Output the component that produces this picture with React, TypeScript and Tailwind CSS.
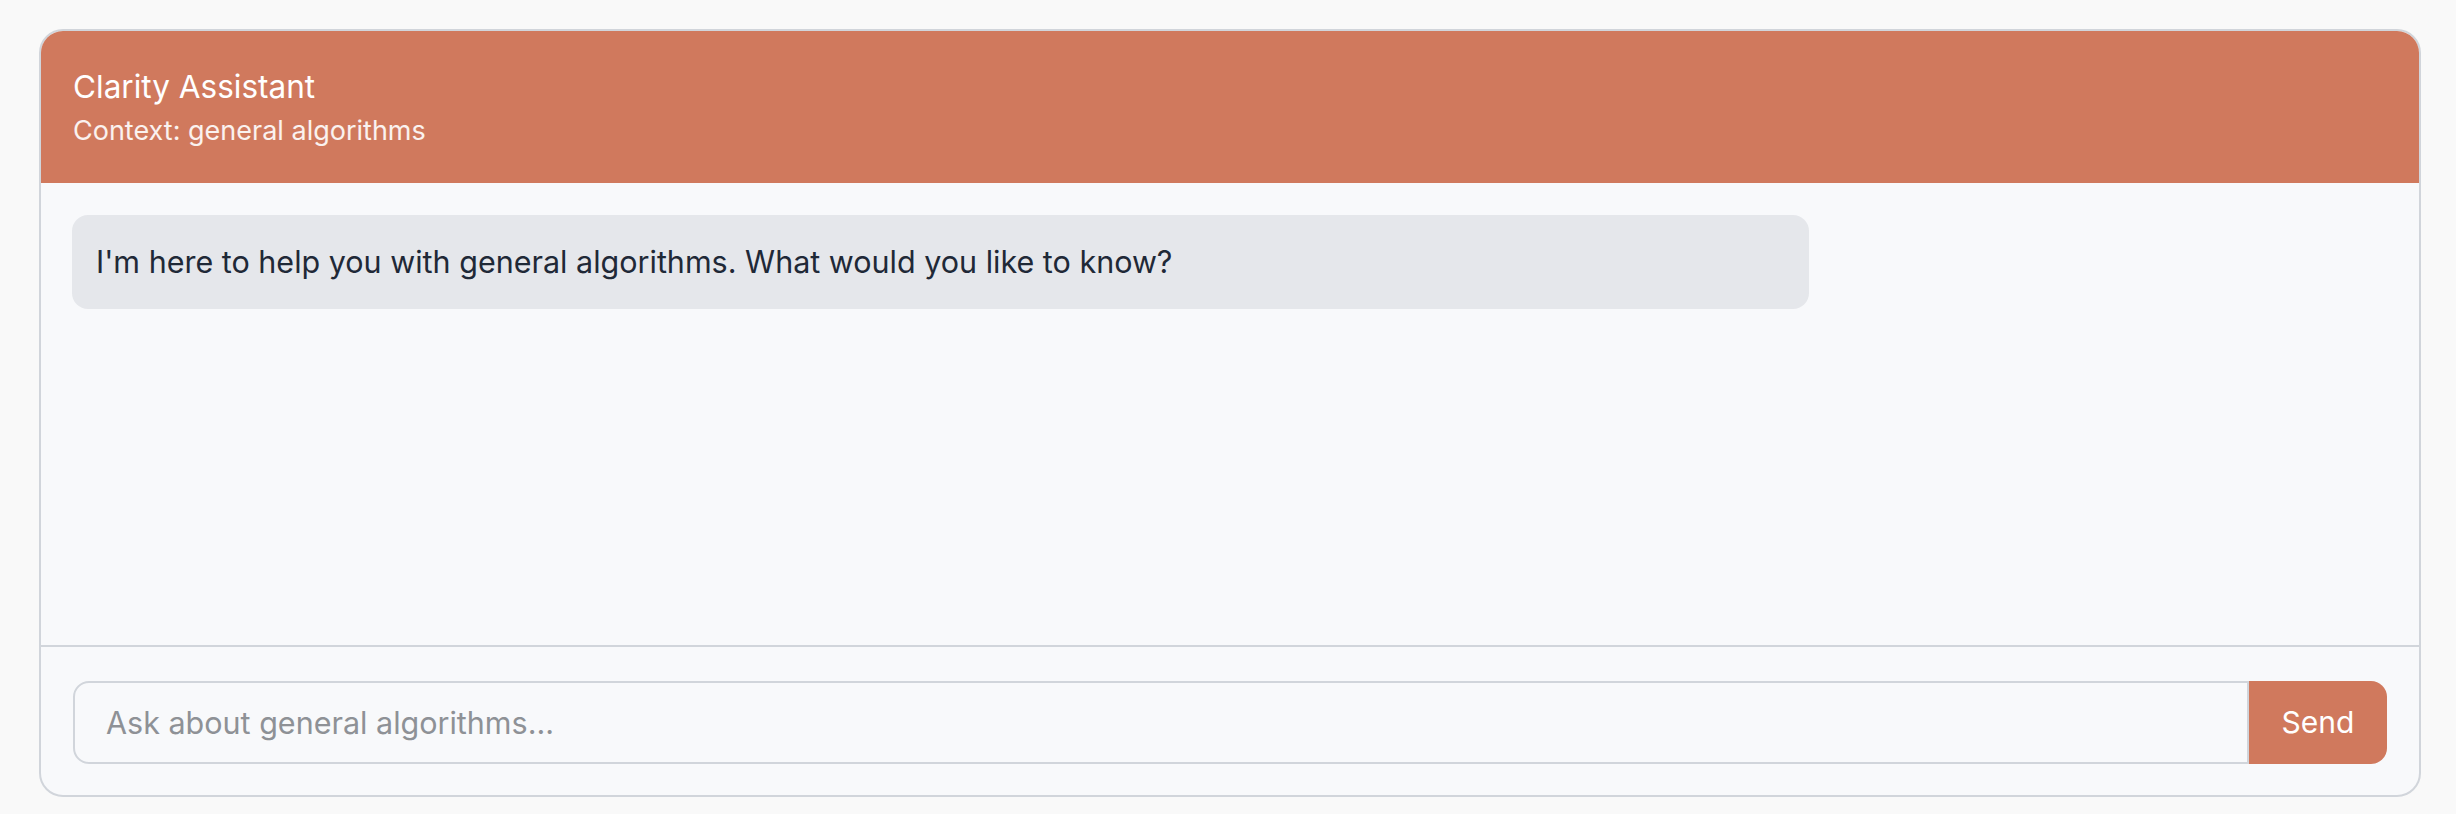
import React from "react";

const font = { fontFamily: "Inter, 'Noto Sans', sans-serif" };

const ChatPanel = ({ topic = "general algorithms" }: { topic?: string }) => {
  return (
    <div className="ml-[39px] mt-[29px] flex h-[768px] w-[2382px] flex-col overflow-hidden rounded-[24px] border-2 border-[#d1d5db] bg-[#f8f9fb]">
      <div className="flex h-[152px] shrink-0 flex-col bg-[#d0795d] px-[32px] pt-[30px] text-white">
        <div className="text-[31.5px] leading-[52px]">Clarity Assistant</div>
        <div className="text-[27px] leading-[36px] text-white/90">Context: {topic}</div>
      </div>

      <div className="flex-1 px-[31px] pt-[32px]">
        <div className="w-[1737px] rounded-[16px] bg-[#e5e7eb] px-[24px] py-[23px] text-[30.5px] leading-[48px] text-[#1f2937]">
          I'm here to help you with {topic}. What would you like to know?
        </div>
      </div>

      <div className="flex shrink-0 border-t-2 border-[#d1d5db] px-[32px] pt-[34px] pb-[31px]">
        <input
          className="h-[83px] flex-1 rounded-l-[16px] border-2 border-[#d1d5db] bg-transparent px-[31px] text-[30.5px] text-[#1f2937] placeholder:text-[#8e9196] outline-none"
          placeholder={`Ask about ${topic}...`}
          style={font}
        />
        <button className="h-[83px] w-[138px] rounded-r-[16px] bg-[#d0795d] text-[30px] text-white">
          Send
        </button>
      </div>
    </div>
  );
};

export default function App() {
  return (
    <div className="h-[814px] w-full overflow-hidden bg-[#f9f9f9]" style={font}>
      <ChatPanel />
    </div>
  );
}
